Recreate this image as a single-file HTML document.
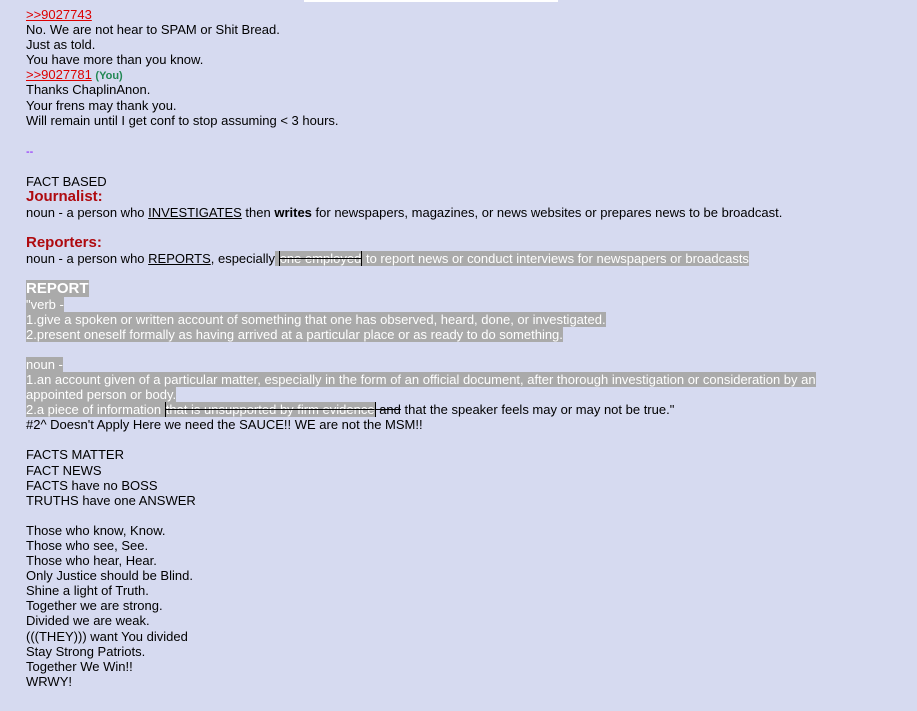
<!DOCTYPE html>
<html><head><meta charset="utf-8"><style>
html,body{margin:0;padding:0;background:#d6daf0;width:917px;height:711px;overflow:hidden}
body{font-family:"Liberation Sans",Arial,sans-serif;font-size:13px;line-height:15.1px;color:#000}
.bar{position:absolute;left:304px;top:0;width:254px;height:2px;background:#fff}
.c{position:absolute;left:26px;top:7px;width:835px}
a{color:#d00;text-decoration:underline}
.you{color:#228854;font-weight:bold;font-size:11px;line-height:0}
.h{color:#af0a0f;font-weight:bold;font-size:15px;line-height:16px}
.hl{background:#aaa;color:#fff}
.s{text-decoration:line-through;text-decoration-color:#000;border-left:1px solid #000;border-right:1px solid #000}
u{text-decoration:underline}
.d{color:#8000ff;font-size:11px;line-height:0}
.gap{height:16px}
</style></head><body>
<div class="bar"></div>
<div class="c">
<a>&gt;&gt;9027743</a><br>
No. We are not hear to SPAM or Shit Bread.<br>
Just as told.<br>
You have more than you know.<br>
<a>&gt;&gt;9027781</a> <span class="you">(You)</span><br>
Thanks ChaplinAnon.<br>
Your frens may thank you.<br>
Will remain until I get conf to stop assuming &lt; 3 hours.<br>
<br>
<span class="d">--</span>
<div class="gap"></div>
FACT BASED<br>
<span class="h">Journalist:</span><br>
noun - a person who <u>INVESTIGATES</u> then <b>writes</b> for newspapers, magazines, or news websites or prepares news to be broadcast.<br>
<br>
<span class="h">Reporters:</span><br>
noun - a person who <u>REPORTS</u>, especially<span class="hl"> <span class="s">one employed</span> to report news or conduct interviews for newspapers or broadcasts</span><br>
<br>
<span class="hl" style="font-size:15px;font-weight:bold">REPORT</span><br>
<span class="hl">"verb - </span><br>
<span class="hl">1.give a spoken or written account of something that one has observed, heard, done, or investigated. </span><br>
<span class="hl">2.present oneself formally as having arrived at a particular place or as ready to do something. </span><br>
<br>
<span class="hl">noun - </span><br>
<span class="hl">1.an account given of a particular matter, especially in the form of an official document, after thorough investigation or consideration by an appointed person or body. </span><br>
<span class="hl">2.a piece of information <span class="s">that is unsupported by firm evidence</span></span><span style="text-decoration:line-through"> and</span> that the speaker feels may or may not be true."<br>
#2^ Doesn't Apply Here we need the SAUCE!! WE are not the MSM!!<br>
<br>
FACTS MATTER<br>
FACT NEWS<br>
FACTS have no BOSS<br>
TRUTHS have one ANSWER<br>
<br>
Those who know, Know.<br>
Those who see, See.<br>
Those who hear, Hear.<br>
Only Justice should be Blind.<br>
Shine a light of Truth.<br>
Together we are strong.<br>
Divided we are weak.<br>
(((THEY))) want You divided<br>
Stay Strong Patriots.<br>
Together We Win!!<br>
WRWY!
</div>
</body></html>
